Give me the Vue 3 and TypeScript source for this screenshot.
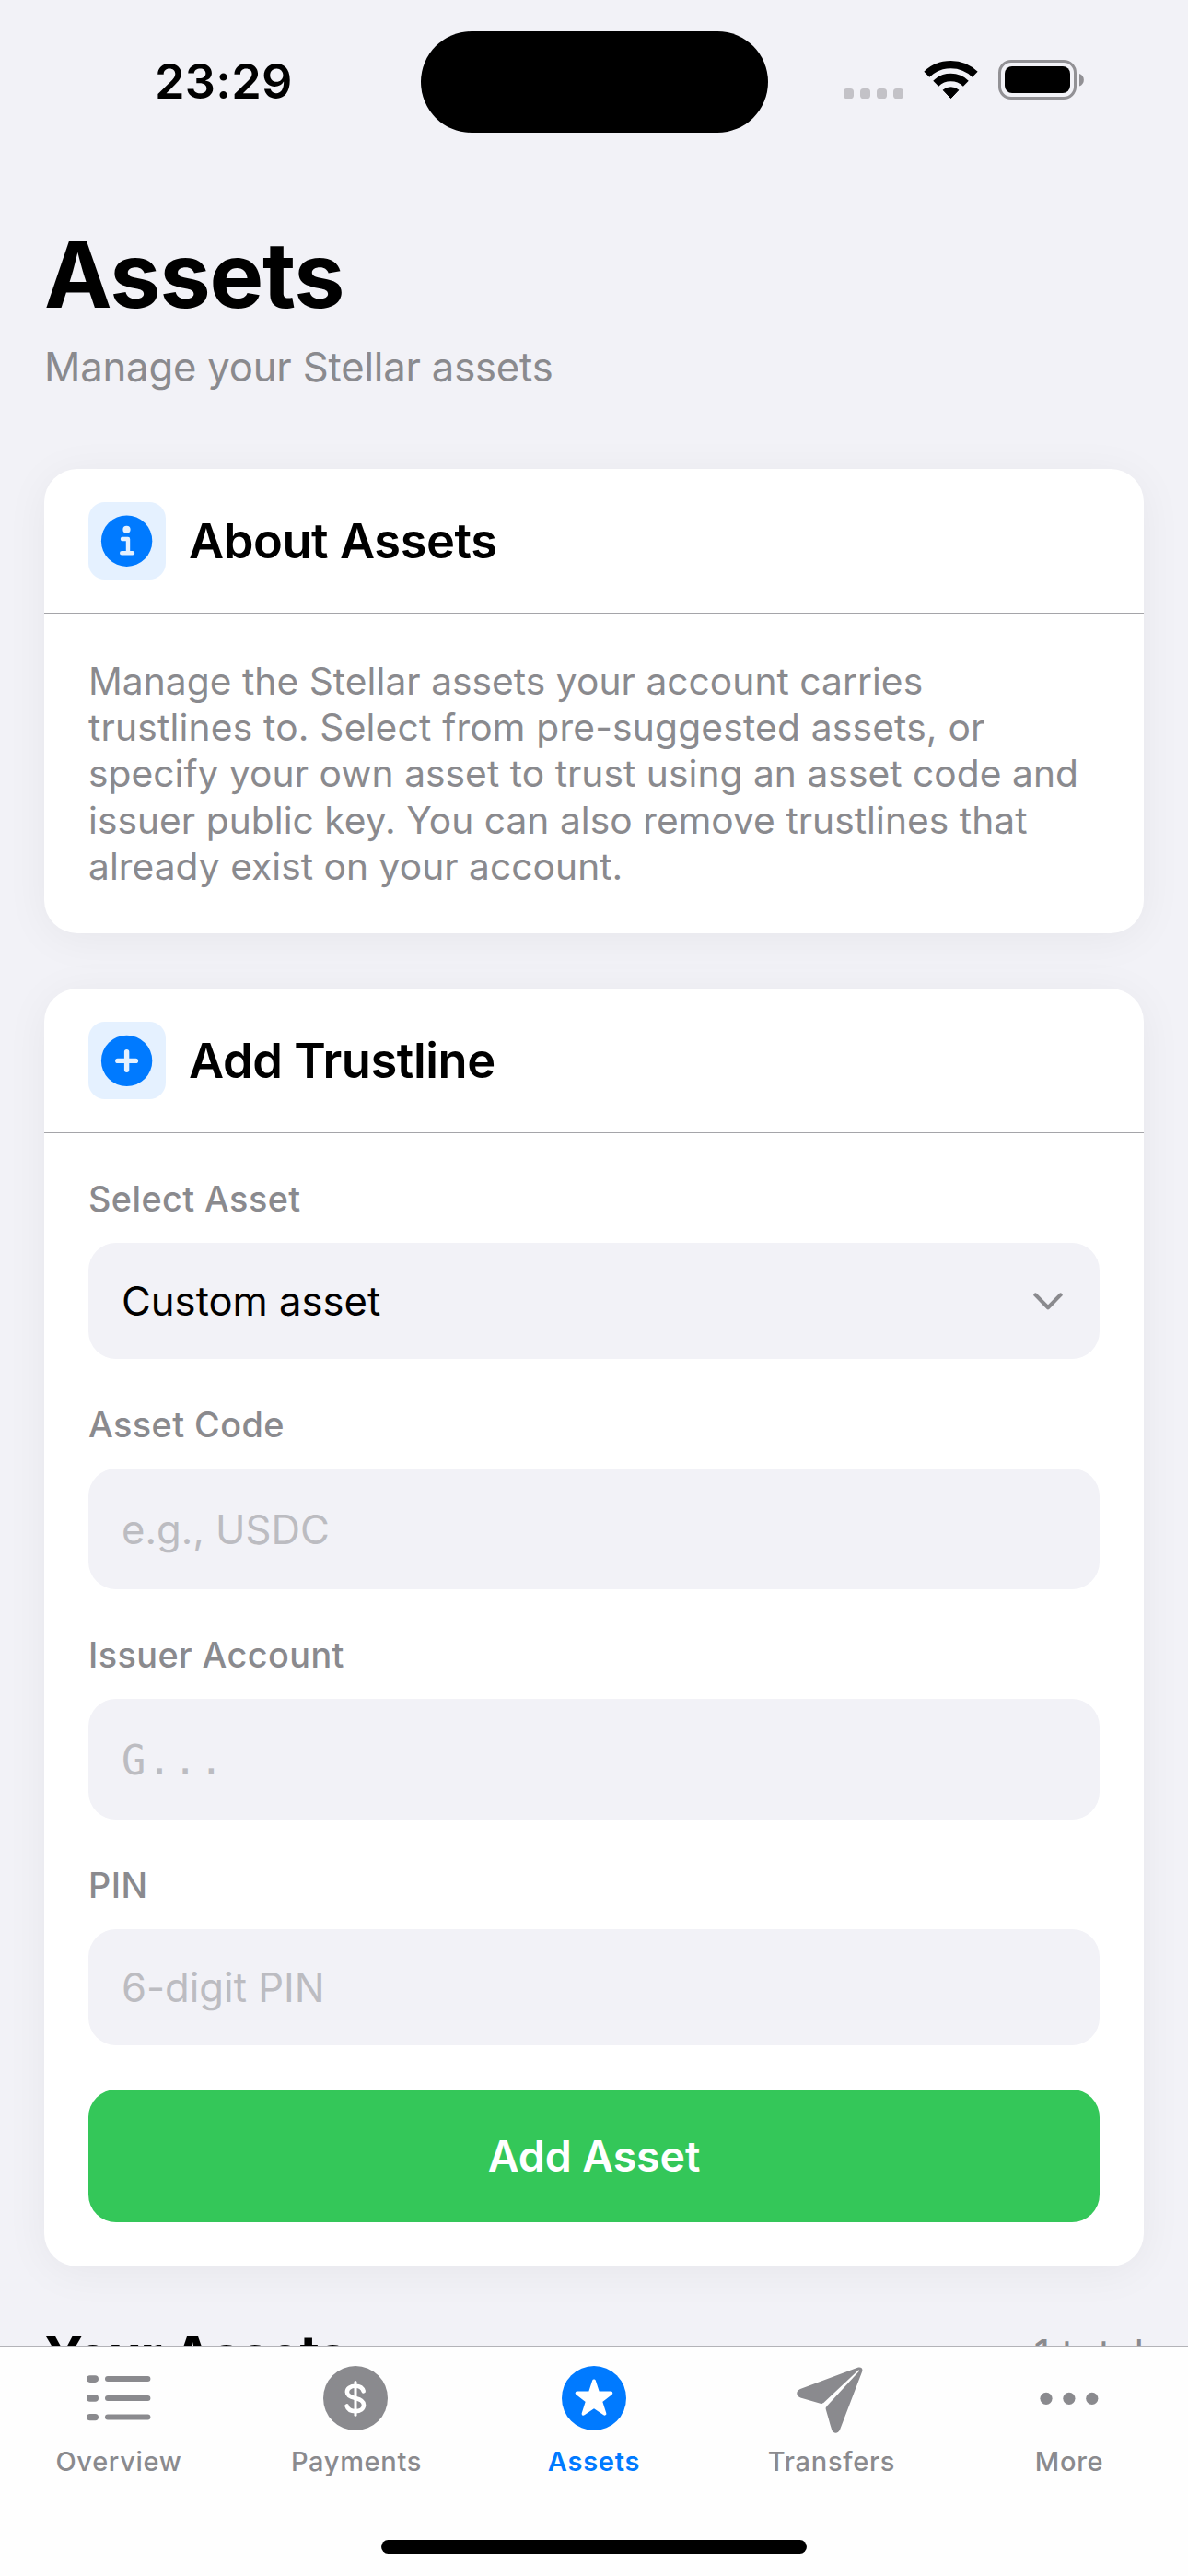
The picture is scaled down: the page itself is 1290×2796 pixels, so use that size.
<script setup lang="ts">
import { ref } from 'vue'

interface Field {
  id: string
  label: string
  placeholder: string
  tall: boolean
  mono?: boolean
}

interface Tab {
  id: string
  label: string
}

const fields: Field[] = [
  { id: 'code', label: 'Asset Code', placeholder: 'e.g., USDC', tall: true },
  { id: 'issuer', label: 'Issuer Account', placeholder: 'G...', tall: true, mono: true },
  { id: 'pin', label: 'PIN', placeholder: '6-digit PIN', tall: false },
]

const tabs: Tab[] = [
  { id: 'overview', label: 'Overview' },
  { id: 'payments', label: 'Payments' },
  { id: 'assets', label: 'Assets' },
  { id: 'transfers', label: 'Transfers' },
  { id: 'more', label: 'More' },
]

const activeTab = ref('assets')
</script>

<template>
  <div class="screen">
    <div class="island"></div>

    <main class="content">
      <header class="status-bar">
        <span class="clock">23:29</span>
        <svg class="status-icons" width="262" height="44" viewBox="0 0 262 44">
          <g fill="#c3c2c7">
            <rect x="0" y="31" width="11" height="11" rx="3.6" />
            <rect x="18" y="31" width="11" height="11" rx="3.6" />
            <rect x="36" y="31" width="11" height="11" rx="3.6" />
            <rect x="54" y="31" width="11" height="11" rx="3.6" />
          </g>
          <g fill="none" stroke="#000" stroke-width="8.4">
            <path d="M90.3 15.8 A37.4 37.4 0 0 1 142.7 15.8" />
            <path d="M100.2 25.7 A23.3 23.3 0 0 1 132.8 25.7" />
          </g>
          <path d="M108.2 32.8 A13 13 0 0 1 124.8 32.8 L116.5 41.6 Z" fill="#000" stroke="#000" stroke-width="1" stroke-linejoin="round" />
          <rect x="169.5" y="1.5" width="82" height="40" rx="12.5" fill="none" stroke="#929195" stroke-width="3" />
          <rect x="175" y="7" width="71" height="29" rx="8" fill="#000" />
          <path d="M256 15 C262.5 17 262.5 26.5 256 28.5 Z" fill="#929195" />
        </svg>
      </header>

      <section class="heading">
        <h1>Assets</h1>
        <p>Manage your Stellar assets</p>
      </section>

      <section class="card">
        <div class="card-head">
          <svg class="badge" width="84" height="84" viewBox="0 0 84 84">
            <rect width="84" height="84" rx="18" fill="#e5f1ff" />
            <circle cx="41.6" cy="42.2" r="27.7" fill="#007aff" />
            <circle cx="41.5" cy="29.8" r="4.1" fill="#e5f1ff" />
            <path d="M37 40 H43 V55.2 M36.2 55.2 H48" fill="none" stroke="#e5f1ff" stroke-width="4.4" stroke-linecap="round" stroke-linejoin="round" />
          </svg>
          <h2>About Assets</h2>
        </div>
        <div class="card-body intro">
          <p class="about">
            Manage the Stellar assets your account carries<br />
            <span class="loose">trustlines to. Select from pre-suggested assets, or</span><br />
            specify your own asset to trust using an asset code and<br />
            issuer public key. You can also remove trustlines that<br />
            already exist on your account.
          </p>
        </div>
      </section>

      <section class="card">
        <div class="card-head">
          <svg class="badge" width="84" height="84" viewBox="0 0 84 84">
            <rect width="84" height="84" rx="18" fill="#e5f1ff" />
            <circle cx="41.6" cy="42.4" r="27.7" fill="#007aff" />
            <path d="M31.8 42.4 H51.4 M41.6 32.6 V52.2" stroke="#e5f1ff" stroke-width="5.4" stroke-linecap="round" />
          </svg>
          <h2>Add Trustline</h2>
        </div>
        <div class="card-body form">
          <div class="field">
            <span class="label">Select Asset</span>
            <div class="control">
              <span class="value">Custom asset</span>
              <svg class="chevron" width="32" height="19" viewBox="0 0 32 19">
                <path d="M2.4 2.4 L16 16.2 L29.6 2.4" fill="none" stroke="#8a8a8e" stroke-width="4.2" stroke-linecap="round" stroke-linejoin="round" />
              </svg>
            </div>
          </div>
          <div v-for="field in fields" :key="field.id" class="field">
            <span class="label">{{ field.label }}</span>
            <div class="control" :class="{ tall: field.tall }">
              <span class="placeholder" :class="{ mono: field.mono }">{{ field.placeholder }}</span>
            </div>
          </div>
          <button class="submit" type="button">Add Asset</button>
        </div>
      </section>

      <section class="list-head">
        <h3>Your Assets</h3>
        <span class="count">1 total</span>
      </section>
    </main>

    <nav class="tab-bar">
      <div class="tabs">
        <div
          v-for="tab in tabs"
          :key="tab.id"
          class="tab"
          :class="{ active: tab.id === activeTab }"
          @click="activeTab = tab.id"
        >
          <svg class="tab-icon" width="76" height="76" viewBox="0 0 76 76">
            <g v-if="tab.id === 'overview'" fill="currentColor">
              <rect x="3" y="13.3" width="13" height="7.6" rx="3.8" />
              <rect x="3" y="34.1" width="13" height="7.6" rx="3.8" />
              <rect x="3" y="54.9" width="13" height="7.4" rx="3.7" />
              <rect x="23" y="14.1" width="49.4" height="6" rx="3" />
              <rect x="23" y="34.9" width="49.4" height="6" rx="3" />
              <rect x="23" y="55.6" width="49.4" height="6" rx="3" />
            </g>
            <g v-else-if="tab.id === 'payments'" transform="translate(-1 0)">
              <circle cx="38" cy="38" r="35" fill="currentColor" />
              <path d="M46.7 30.4 C45.6 26.6 42.3 24.8 38 24.8 C32.4 24.8 28.9 27.6 28.9 31.2 C28.9 35.4 32.5 36.8 38 38 C43.6 39.3 47 41 47 45.3 C47 49.5 43 52.1 38 52.1 C33 52.1 29.6 50.2 28.6 46.4" fill="none" stroke="#fff" stroke-width="4.6" stroke-linecap="round" />
              <path d="M38 20.4 V56.2" stroke="#fff" stroke-width="3" stroke-linecap="round" />
            </g>
            <g v-else-if="tab.id === 'assets'">
              <circle cx="38" cy="38" r="35" fill="currentColor" />
              <path d="M38 19.4 L42.3 32.5 L56.4 32.5 L45.1 41.2 L49.5 54.8 L38 46.9 L26.5 54.8 L30.9 41.2 L19.6 32.5 L33.7 32.5 Z" fill="#fff" stroke="#fff" stroke-width="3.8" stroke-linejoin="round" />
            </g>
            <g v-else-if="tab.id === 'transfers'" transform="translate(-1.2 0)">
              <path d="M67.5 4.7 C71.4 3.6 73.6 5.6 72.2 9.4 L48.4 71.8 C46.2 77.2 40.9 76.9 39.3 72 C37 64.4 35 57 33 50.2 C32.6 48.8 32.9 48 33.7 47 L30.2 43 C29.3 43.9 28.4 44.2 27 43.7 L5.4 37.6 C.2 35.6 .2 30.2 5.2 28.1 Z" fill="currentColor" />
              <path d="M68.3 7.6 Q69.4 7.3 69.3 8.5 L33.2 47.4 L29.7 43.7 Z" fill="#fff" />
            </g>
            <g v-else fill="currentColor">
              <circle cx="13" cy="38.3" r="6.6" />
              <circle cx="37.9" cy="38.3" r="6.6" />
              <circle cx="62.8" cy="38.3" r="6.6" />
            </g>
          </svg>
          <span class="tab-label">{{ tab.label }}</span>
        </div>
      </div>
      <div class="home-indicator"></div>
    </nav>
  </div>
</template>

<style>
body {
  margin: 0;
  background: #f2f2f7;
}
</style>

<style scoped>
.screen {
  position: relative;
  width: 1290px;
  height: 2796px;
  display: flex;
  flex-direction: column;
  overflow: hidden;
  background: #f2f2f7;
  color: #000;
  font-family: Inter, 'Liberation Sans', sans-serif;
}

h1,
h2,
h3,
p {
  margin: 0;
}

.island {
  position: absolute;
  top: 33.5px;
  left: 456.5px;
  width: 377px;
  height: 110.5px;
  border-radius: 56px;
  background: #000;
}

.content {
  height: 2546px;
  box-sizing: border-box;
  padding: 0 48px;
  overflow: hidden;
}

.status-bar {
  height: 238px;
  box-sizing: border-box;
  padding: 58px 65px 0 120px;
  display: flex;
  justify-content: space-between;
  align-items: flex-start;
}

.clock {
  font-size: 52.2px;
  font-weight: 600;
  line-height: 60px;
  letter-spacing: 0.3px;
}

.status-icons {
  margin-top: 7px;
  margin-right: -1px;
}

.heading h1 {
  font-size: 98.6px;
  font-weight: 700;
  line-height: 120px;
  letter-spacing: -1.15px;
}

.heading p {
  margin-top: 14px;
  font-size: 43.6px;
  line-height: 54px;
  letter-spacing: -0.17px;
  color: #8a8a8e;
}

.card {
  margin-top: 60px;
  border-radius: 36px;
  background: #fff;
  box-shadow: 0 6px 48px rgba(0, 0, 0, 0.05);
}

.heading + .card {
  margin-top: 83px;
}

.card-head {
  height: 156px;
  display: flex;
  align-items: center;
  gap: 25px;
  padding: 0 48px;
  border-bottom: 1px solid #a5a5a9;
}

.card-head h2 {
  font-size: 52.4px;
  font-weight: 600;
  line-height: 64px;
  letter-spacing: -0.42px;
}

.card-body {
  padding: 48px;
}

.card-body.intro {
  padding: 49px 48px 47px;
}

.about {
  font-size: 40.7px;
  line-height: 50.2px;
  letter-spacing: 0.05px;
  color: #8a8a8e;
  white-space: nowrap;
}

.loose {
  letter-spacing: 0.2px;
}

.form {
  display: flex;
  flex-direction: column;
  gap: 48px;
}

.field {
  display: flex;
  flex-direction: column;
  gap: 24px;
}

.label {
  font-size: 37.8px;
  font-weight: 500;
  line-height: 47px;
  letter-spacing: 0.42px;
  color: #8a8a8e;
}

.control {
  height: 126px;
  box-sizing: border-box;
  padding: 0 40px 0 36px;
  display: flex;
  align-items: center;
  justify-content: space-between;
  border-radius: 30px;
  background: #f2f2f7;
  font-size: 43.6px;
  line-height: 54px;
}

.control span {
  padding-top: 2px;
}

.control.tall {
  height: 131px;
}

.placeholder {
  color: #bcbcc1;
}

.mono {
  font-family: 'DejaVu Sans Mono', monospace;
  letter-spacing: 1.8px;
}

.submit {
  height: 144px;
  border: 0;
  padding: 0;
  border-radius: 30px;
  background: #34c759;
  color: #fff;
  font-family: inherit;
  font-size: 46.5px;
  font-weight: 600;
  line-height: 56px;
  letter-spacing: -0.1px;
}

.list-head {
  margin-top: 60px;
  display: flex;
  justify-content: space-between;
  align-items: center;
}

.list-head h3 {
  font-size: 58.2px;
  font-weight: 700;
  line-height: 72px;
  letter-spacing: -1.2px;
}

.count {
  font-size: 43.6px;
  line-height: 54px;
  color: #8a8a8e;
}

.tab-bar {
  height: 250px;
  box-sizing: border-box;
  display: flex;
  flex-direction: column;
  align-items: center;
  border-top: 1px solid #b3b3b8;
  background: #fefefe;
}

.tabs {
  width: 1290px;
  height: 210px;
  display: flex;
}

.tab {
  flex: 1;
  display: flex;
  flex-direction: column;
  align-items: center;
  padding-top: 18px;
  color: #8a8a8e;
}

.tab.active {
  color: #007aff;
}

.tab-icon {
  display: block;
}

.tab-label {
  margin-top: 13px;
  font-size: 29px;
  font-weight: 500;
  line-height: 36px;
  letter-spacing: 0.7px;
}

.tab.active .tab-label {
  font-weight: 600;
  letter-spacing: 0.75px;
}

.home-indicator {
  width: 462px;
  height: 15px;
  border-radius: 8px;
  background: #000;
}
</style>
